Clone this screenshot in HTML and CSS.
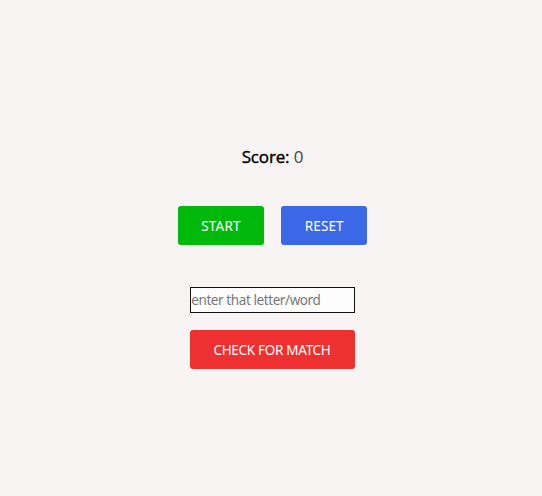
FILE: index.html
```html
<!DOCTYPE html>
<html lang="en">
<head>
<meta charset="utf-8">
<title>Letter Match</title>
<link rel="stylesheet" href="styles.css">
</head>
<body>
<main class="game">
<p class="score"><span class="score-label">Score:</span> <span class="score-value">0</span></p>
<div class="controls">
<button class="btn start" type="button">START</button>
<button class="btn reset" type="button">RESET</button>
</div>
<form class="guess">
<input class="guess-input" type="text" placeholder="enter that letter/word">
<button class="btn check" type="button">CHECK FOR MATCH</button>
</form>
</main>
</body>
</html>
```
FILE: styles.css
```css
* { box-sizing: border-box; }
body {
  margin: 0;
  background: #f9f4f4;
  font-family: "Noto Sans", sans-serif;
}
.game {
  display: flex;
  flex-direction: column;
  align-items: center;
  padding: 145px 0 0 3px;
}
.score {
  margin: 0 0 37px;
  font: 17px/24px "Open Sans", sans-serif;
  color: #444;
  letter-spacing: -0.15px;
}
.score-label { color: #000; -webkit-text-stroke: 0.4px #000; }
.controls { display: flex; gap: 17px; }
.btn {
  height: 39.4px;
  padding: 1px 0 0;
  border: 0;
  border-radius: 3px;
  color: #fff;
  font: 13.5px/38px "Noto Sans", sans-serif;
  letter-spacing: -0.3px;
  white-space: nowrap;
}
.start { width: 86.5px; background: #00b90b; letter-spacing: 0.2px; }
.reset { width: 86px; background: #3b68e7; letter-spacing: 0.1px; }
.guess {
  display: flex;
  flex-direction: column;
  width: 164.5px;
  margin-top: 41.6px;
}
.guess-input {
  height: 26px;
  margin-bottom: 17px;
  padding: 0;
  border: 1px solid #111;
  border-radius: 0;
  background: #fefdfd;
  font: 13.5px/24px "Noto Sans", sans-serif;
  letter-spacing: -0.41px;
}
.guess-input::placeholder { color: #777; opacity: 1; }
.check { height: 39px; padding-right: 1px; background: #ee3030; }
```
